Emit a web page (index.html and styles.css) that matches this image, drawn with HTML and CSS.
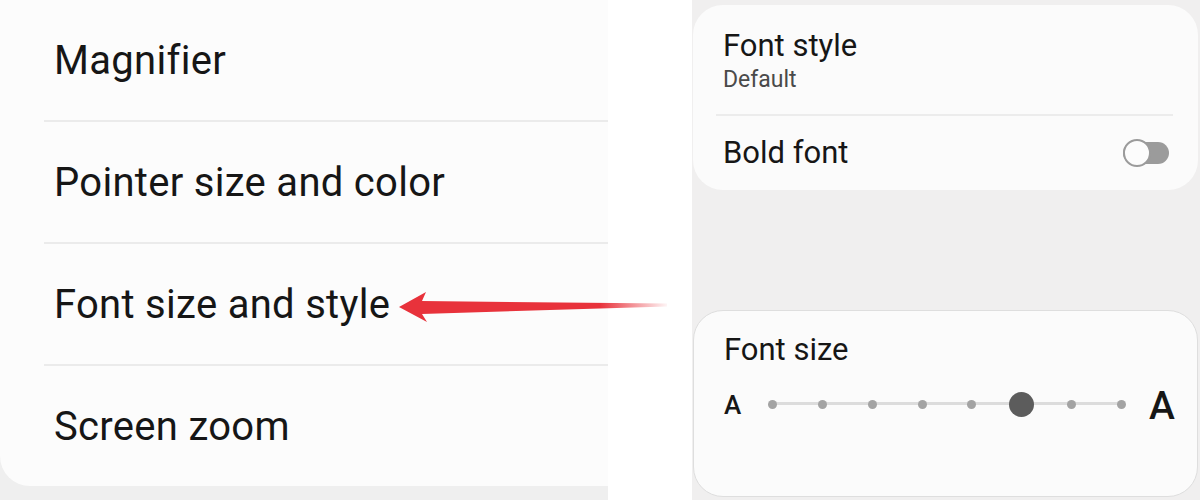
FILE: index.html
```html
<!DOCTYPE html>
<html>
<head>
<meta charset="utf-8">
<link rel="stylesheet" href="styles.css">
</head>
<body>
<div class="page">
  <div class="left">
    <div class="list">
      <div class="row">Magnifier</div>
      <div class="sep"></div>
      <div class="row">Pointer size and color</div>
      <div class="sep"></div>
      <div class="row">Font size and style</div>
      <div class="sep"></div>
      <div class="row">Screen zoom</div>
    </div>
  </div>
  <div class="gutter"></div>
  <div class="right">
    <div class="card card-top">
      <div class="item item-style">
        <div class="title">Font style</div>
        <div class="sub">Default</div>
      </div>
      <div class="card-sep"></div>
      <div class="item item-bold">
        <div class="title">Bold font</div>
        <div class="toggle"><span class="knob"></span></div>
      </div>
    </div>
    <div class="card card-size">
      <div class="title">Font size</div>
      <div class="slider-row">
        <span class="a-small">A</span>
        <div class="slider">
          <div class="track"></div>
          <span class="dot"></span>
          <span class="dot"></span>
          <span class="dot"></span>
          <span class="dot"></span>
          <span class="dot"></span>
          <span class="thumb"></span>
          <span class="dot"></span>
          <span class="dot"></span>
        </div>
        <span class="a-large">A</span>
      </div>
    </div>
  </div>
  <svg class="arrow" width="280" height="45" viewBox="0 0 280 45">
    <defs>
      <linearGradient id="fade" x1="0" y1="0" x2="1" y2="0">
        <stop offset="0" stop-color="#e8323b"/>
        <stop offset="0.75" stop-color="#e8323b"/>
        <stop offset="1" stop-color="#e8323b" stop-opacity="0.05"/>
      </linearGradient>
    </defs>
    <polygon fill="url(#fade)" points="4,22 31,7 27,16 272,18.5 272,21.5 27,29 32,37"/>
  </svg>
</div>
</body>
</html>
```

FILE: styles.css
```css
html, body {
  margin: 0;
  padding: 0;
}
body {
  width: 1200px;
  height: 500px;
  overflow: hidden;
  font-family: Roboto, "Liberation Sans", sans-serif;
  color: #161616;
}
.page {
  position: relative;
  display: flex;
  width: 1200px;
  height: 500px;
}
.left {
  width: 608px;
  height: 500px;
  background: #efefef;
}
.list {
  height: 486px;
  background: #fcfcfc;
  border-bottom-left-radius: 30px;
  display: flex;
  flex-direction: column;
}
.row {
  height: 120px;
  display: flex;
  align-items: center;
  padding-left: 54px;
  font-size: 40px;
  letter-spacing: 0.3px;
}
.sep {
  height: 2px;
  margin-left: 44px;
  background: #ebebeb;
}
.gutter {
  width: 84px;
  background: #ffffff;
}
.right {
  width: 508px;
  height: 500px;
  background: #f0efef;
  display: flex;
  flex-direction: column;
}
.card {
  background: #fbfbfb;
  border-radius: 30px;
  margin-left: 1px;
  width: 505px;
  box-sizing: border-box;
}
.card-top {
  margin-top: 5px;
  height: 185px;
  padding: 0 25px 0 30px;
}
.title {
  font-size: 31px;
  line-height: 36px;
}
.item-style {
  height: 109px;
  box-sizing: border-box;
  padding-top: 23px;
}
.sub {
  font-size: 23px;
  line-height: 26px;
  color: #4a4a4a;
  margin-top: 3px;
}
.card-sep {
  height: 2px;
  background: #ececec;
  margin-left: -7px;
}
.item-bold {
  height: 74px;
  display: flex;
  align-items: center;
  justify-content: space-between;
  padding-bottom: 4px;
}
.toggle {
  position: relative;
  width: 46px;
  height: 22px;
  border-radius: 11px;
  background: #9b9b9b;
  margin-right: 4px;
}
.knob {
  position: absolute;
  left: 0;
  top: -3px;
  width: 24px;
  height: 24px;
  border-radius: 50%;
  background: #fcfcfc;
  border: 2px solid #9b9b9b;
}
.card-size {
  margin-top: 120px;
  height: 187px;
  border: 1px solid #dedede;
  padding: 21px 0 0 30px;
}
.slider-row {
  display: flex;
  align-items: center;
  margin-top: 16px;
  height: 40px;
}
.a-small {
  font-size: 26px;
  font-weight: 500;
  width: 40px;
  padding-top: 2px;
}
.slider {
  position: relative;
  width: 358px;
  height: 26px;
  display: flex;
  align-items: center;
  justify-content: space-between;
  margin-left: 4px;
}
.track {
  position: absolute;
  left: 4px;
  right: 4px;
  top: 11px;
  height: 3px;
  background: #dcdcdc;
}
.dot {
  position: relative;
  width: 9px;
  height: 9px;
  border-radius: 50%;
  background: #a3a3a3;
}
.thumb {
  position: relative;
  width: 25px;
  height: 25px;
  border-radius: 50%;
  background: #5c5c5c;
  margin: 0 -8px;
}
.a-large {
  font-size: 39px;
  font-weight: 500;
  margin-left: 23px;
  padding-top: 4px;
}
.arrow {
  position: absolute;
  left: 395px;
  top: 285px;
}
```
